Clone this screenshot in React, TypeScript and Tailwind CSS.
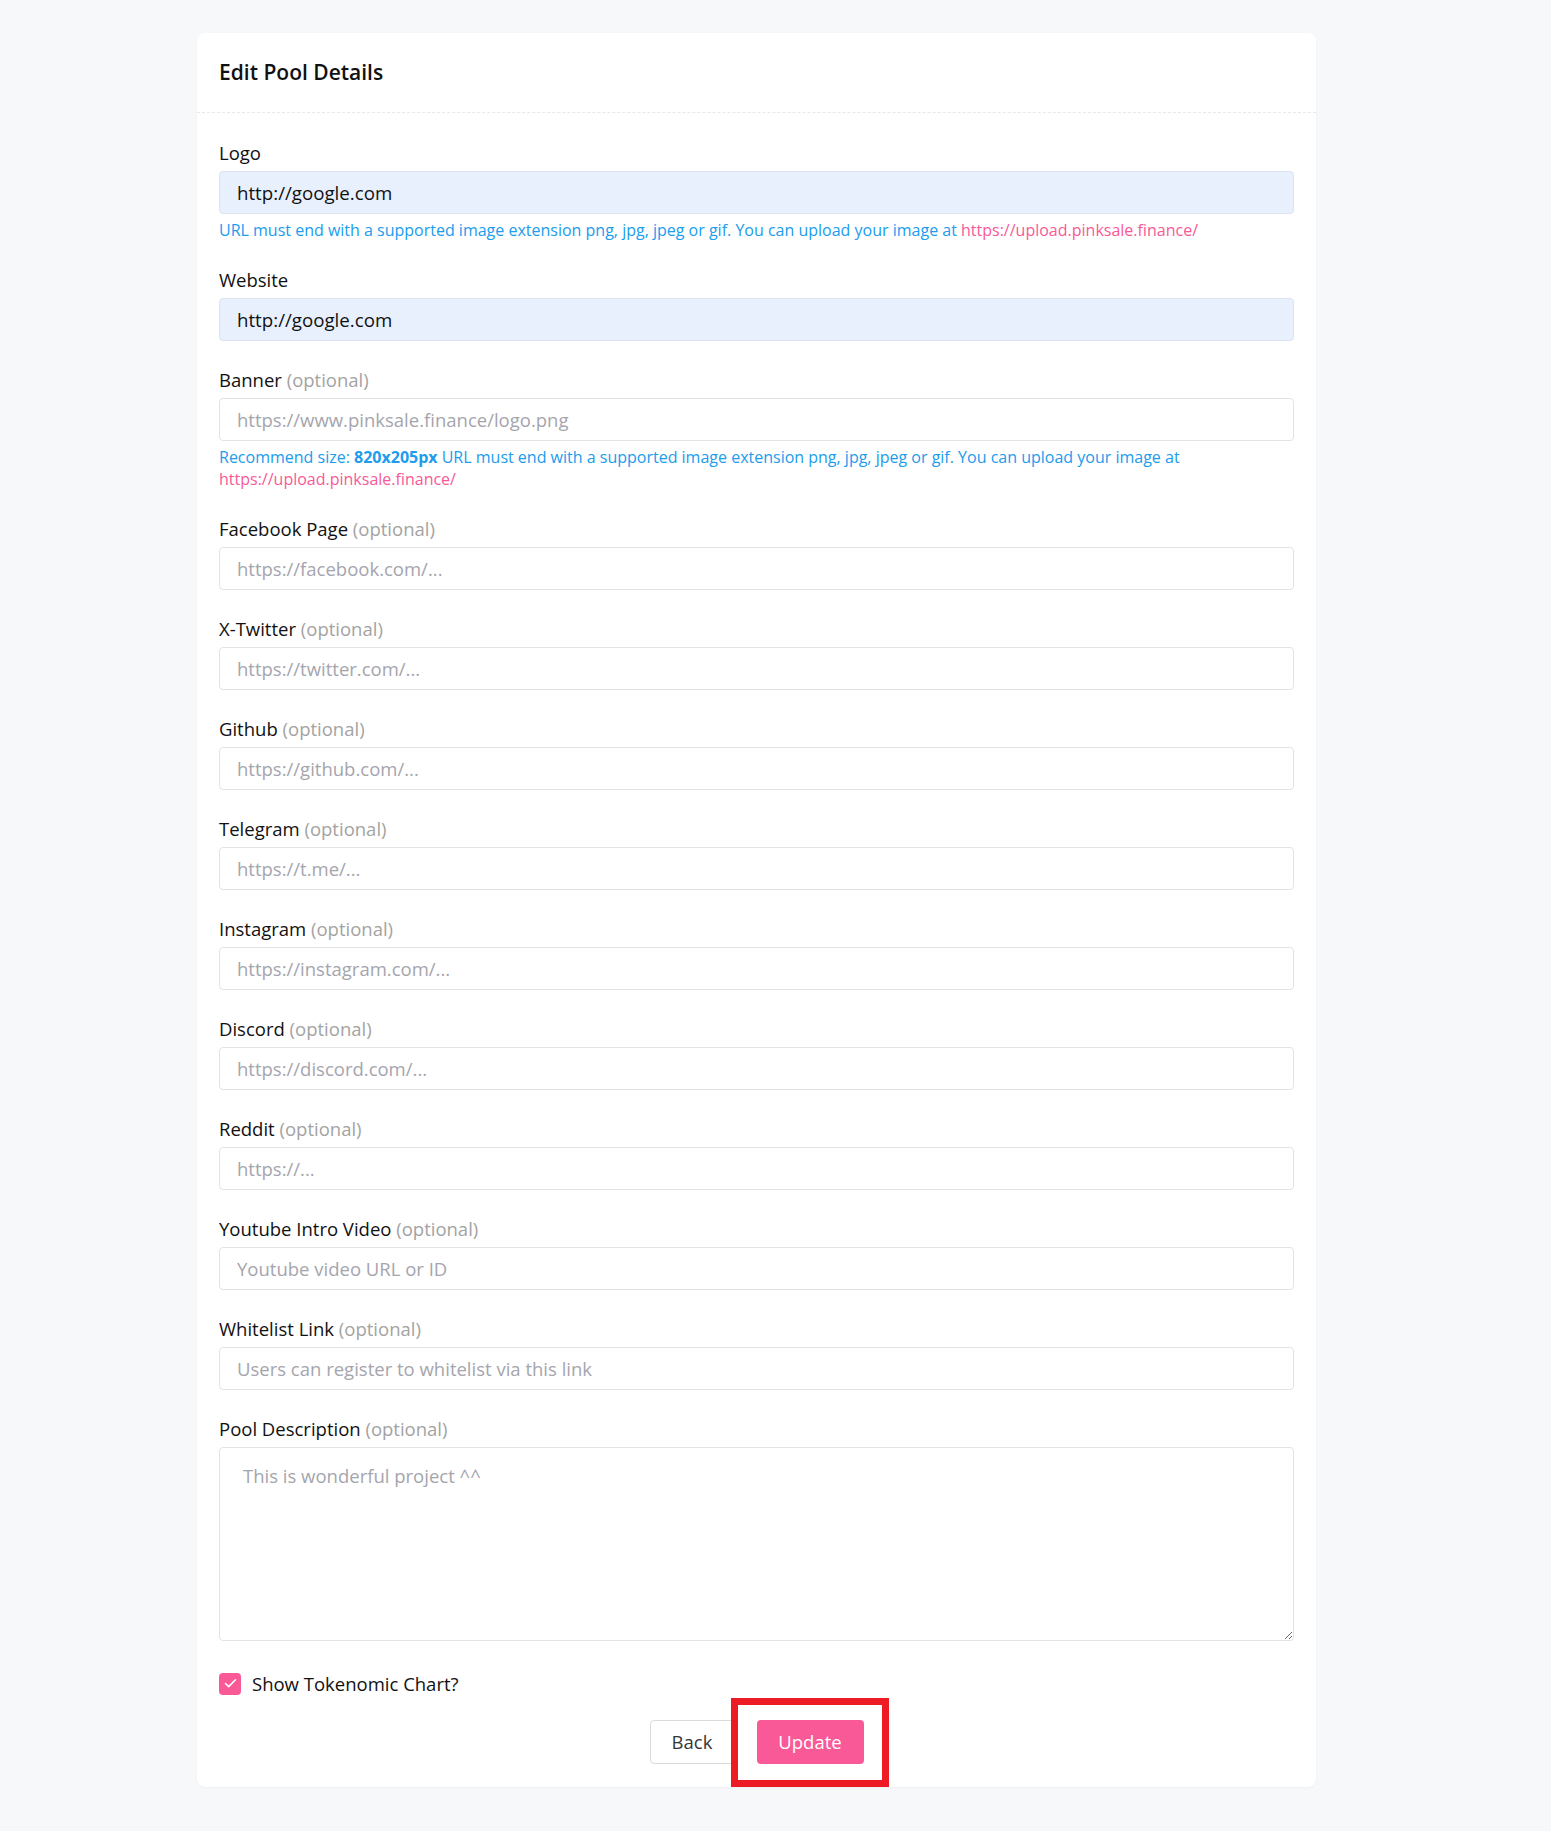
import { Check } from 'lucide-react'

type Field = {
  label: string
  optional?: boolean
  placeholder?: string
  value?: string
  help?: React.ReactNode
}

const fields: Field[] = [
  {
    label: 'Logo',
    value: 'http://google.com',
    help: (
      <>
        URL must end with a supported image extension png, jpg, jpeg or gif. You can upload your image at{' '}
        <a className="text-[#f95997]">https://upload.pinksale.finance/</a>
      </>
    ),
  },
  { label: 'Website', value: 'http://google.com' },
  {
    label: 'Banner',
    optional: true,
    placeholder: 'https://www.pinksale.finance/logo.png',
    help: (
      <>
        Recommend size: <b className="font-bold">820x205px</b> URL must end with a supported image extension png,
        jpg, jpeg or gif. You can upload your image at{' '}
        <a className="text-[#f95997]">https://upload.pinksale.finance/</a>
      </>
    ),
  },
  { label: 'Facebook Page', optional: true, placeholder: 'https://facebook.com/...' },
  { label: 'X-Twitter', optional: true, placeholder: 'https://twitter.com/...' },
  { label: 'Github', optional: true, placeholder: 'https://github.com/...' },
  { label: 'Telegram', optional: true, placeholder: 'https://t.me/...' },
  { label: 'Instagram', optional: true, placeholder: 'https://instagram.com/...' },
  { label: 'Discord', optional: true, placeholder: 'https://discord.com/...' },
  { label: 'Reddit', optional: true, placeholder: 'https://...' },
  { label: 'Youtube Intro Video', optional: true, placeholder: 'Youtube video URL or ID' },
  { label: 'Whitelist Link', optional: true, placeholder: 'Users can register to whitelist via this link' },
]

function Label({ text, optional }: { text: string; optional?: boolean }) {
  return (
    <label className="block text-[18.5px] leading-[27px] text-[#111] mb-[5px]">
      {text}
      {optional && <span className="text-[#a3a3a3]"> (optional)</span>}
    </label>
  )
}

function FormField({ field }: { field: Field }) {
  const filled = field.value !== undefined
  return (
    <div className="mb-[25px]">
      <Label text={field.label} optional={field.optional} />
      <input
        defaultValue={field.value}
        placeholder={field.placeholder}
        className={
          filled
            ? 'block w-full h-[43px] rounded-[4px] border border-[#dde3ee] bg-[#e8f0fe] px-[17px] text-[18.7px] text-[#111] outline-none'
            : 'block w-full h-[43px] rounded-[4px] border border-[#e3e3e6] bg-white px-[17px] text-[18.5px] text-[#111] outline-none placeholder:text-[#a5a5ad]'
        }
      />
      {field.help && <p className="mt-[5px] text-[16px] leading-[22px] text-[#209cee]">{field.help}</p>}
    </div>
  )
}

export default function App() {
  return (
    <div className="min-h-screen bg-[#f7f8fa] pt-[33px] pb-[44px] font-['Open_Sans',sans-serif]">
      <div className="ml-[197px] w-[1119px] rounded-lg bg-white shadow-[0_1px_3px_rgba(0,0,0,0.04)]">
        <div className="h-[80px] flex items-center px-[22px] border-b border-dashed border-[#e8e8ec]">
          <h2 className="text-[21px] font-semibold text-[#111]">Edit Pool Details</h2>
        </div>

        <div className="px-[22px] pt-[26px] pb-[23px]">
          {fields.map((f) => (
            <FormField key={f.label} field={f} />
          ))}

          <div>
            <Label text="Pool Description" optional />
            <textarea
              placeholder="This is wonderful project ^^"
              className="block w-full h-[194px] rounded-[4px] border border-[#e3e3e6] bg-white px-[23px] py-[14px] text-[18.5px] leading-[27px] text-[#111] outline-none placeholder:text-[#a5a5ad]"
            />
          </div>

          <div className="mt-[29px] flex items-center h-[27px] gap-[11px]">
            <span className="flex h-[22px] w-[22px] items-center justify-center rounded-[4px] bg-[#f95997]">
              <Check className="h-[15px] w-[15px] text-white" strokeWidth={2.5} />
            </span>
            <span className="text-[18.5px] text-[#111]">Show Tokenomic Chart?</span>
          </div>

          <div className="mt-[23px] flex justify-center gap-[22px]">
            <button className="h-[44px] w-[85px] rounded-[4px] border border-[#dbdbdb] bg-white text-[18.5px] text-[#363636]">
              Back
            </button>
            <div className="relative">
              <button className="h-[44px] w-[107px] rounded-[4px] bg-[#f95997] text-[18.5px] text-white">Update</button>
              <div className="pointer-events-none absolute -left-[26px] -right-[25px] -top-[22px] -bottom-[23px] border-[7px] border-[#ed1c24]" />
            </div>
          </div>
        </div>
      </div>
    </div>
  )
}
